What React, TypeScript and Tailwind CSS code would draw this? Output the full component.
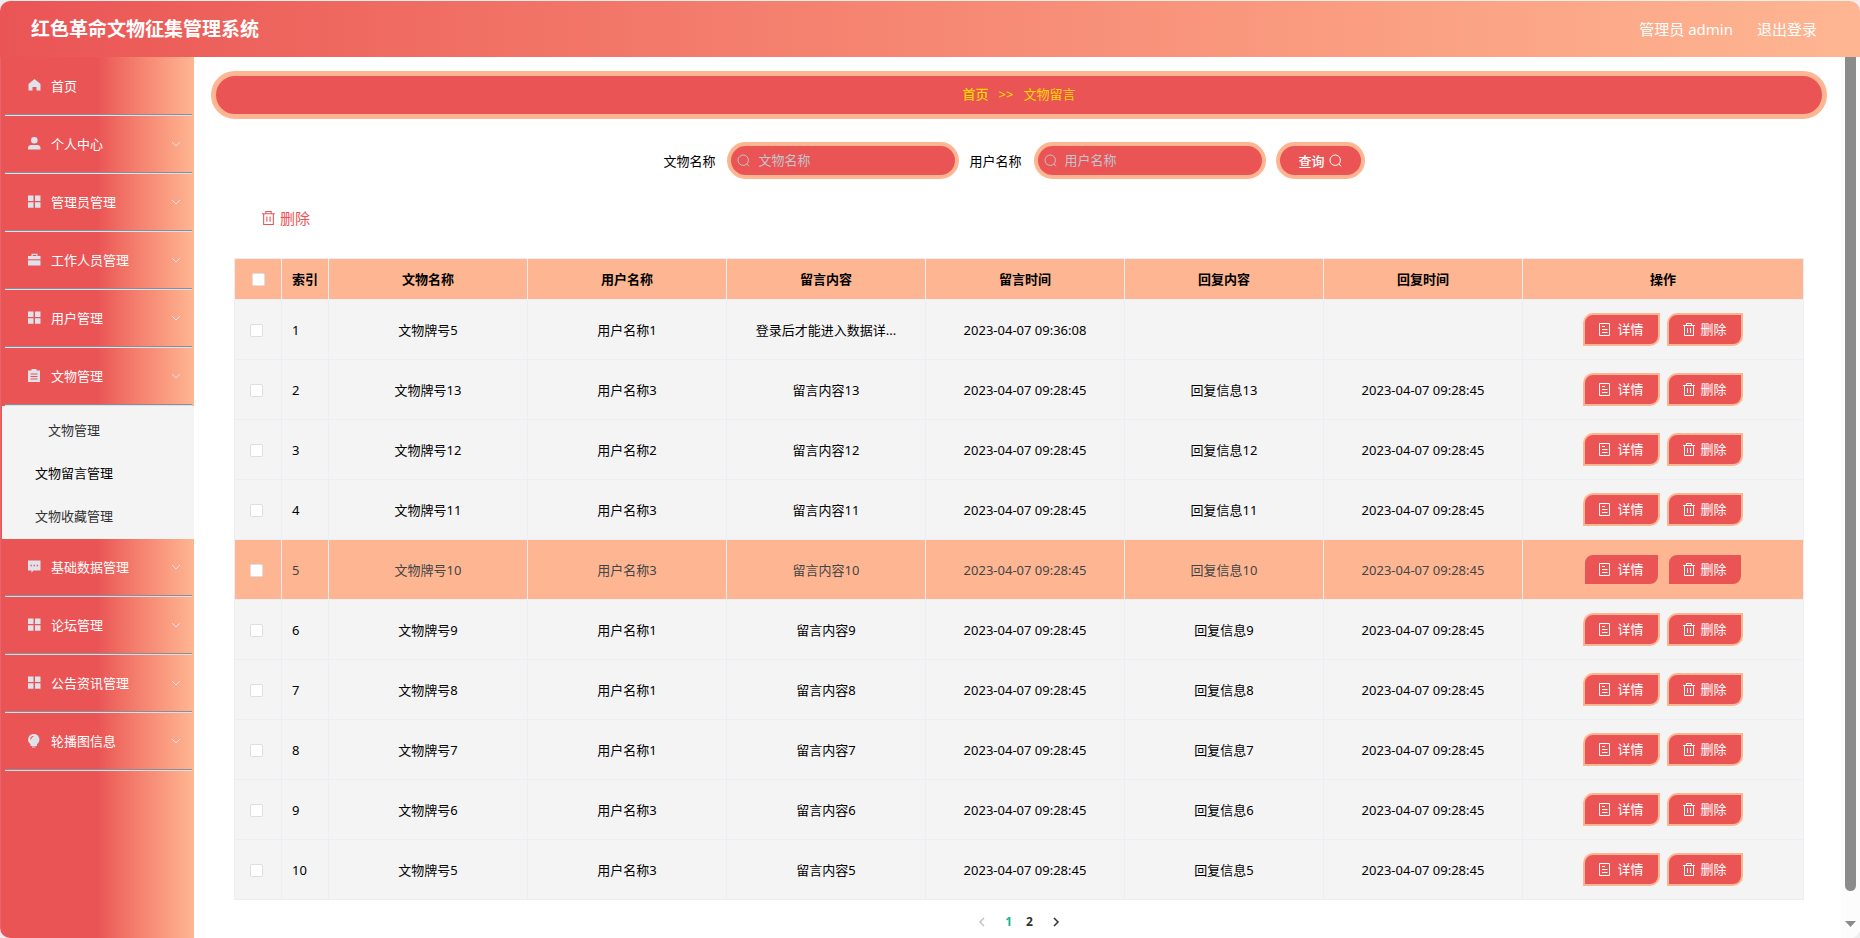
import React from "react";

const rows = [
  { id: 1, relic: "文物牌号5", user: "用户名称1", message: "登录后才能进入数据详...", time: "2023-04-07 09:36:08", reply: "", replyTime: "" },
  { id: 2, relic: "文物牌号13", user: "用户名称3", message: "留言内容13", time: "2023-04-07 09:28:45", reply: "回复信息13", replyTime: "2023-04-07 09:28:45" },
  { id: 3, relic: "文物牌号12", user: "用户名称2", message: "留言内容12", time: "2023-04-07 09:28:45", reply: "回复信息12", replyTime: "2023-04-07 09:28:45" },
  { id: 4, relic: "文物牌号11", user: "用户名称3", message: "留言内容11", time: "2023-04-07 09:28:45", reply: "回复信息11", replyTime: "2023-04-07 09:28:45" },
  { id: 5, relic: "文物牌号10", user: "用户名称3", message: "留言内容10", time: "2023-04-07 09:28:45", reply: "回复信息10", replyTime: "2023-04-07 09:28:45" },
  { id: 6, relic: "文物牌号9", user: "用户名称1", message: "留言内容9", time: "2023-04-07 09:28:45", reply: "回复信息9", replyTime: "2023-04-07 09:28:45" },
  { id: 7, relic: "文物牌号8", user: "用户名称1", message: "留言内容8", time: "2023-04-07 09:28:45", reply: "回复信息8", replyTime: "2023-04-07 09:28:45" },
  { id: 8, relic: "文物牌号7", user: "用户名称1", message: "留言内容7", time: "2023-04-07 09:28:45", reply: "回复信息7", replyTime: "2023-04-07 09:28:45" },
  { id: 9, relic: "文物牌号6", user: "用户名称3", message: "留言内容6", time: "2023-04-07 09:28:45", reply: "回复信息6", replyTime: "2023-04-07 09:28:45" },
  { id: 10, relic: "文物牌号5", user: "用户名称3", message: "留言内容5", time: "2023-04-07 09:28:45", reply: "回复信息5", replyTime: "2023-04-07 09:28:45" },
];

const highlighted = 5;

const menuIcons = {
  home: <path d="M6.5 0 12.500 5v6.500H8.500V8h-4v3.500H.5V5z" />,
  user: (
    <>
      <circle cx="6.300" cy="3.300" r="3.300" />
      <path d="M0 12.500v-1.500C0 9 1.500 8 3 8h6.500c1.500 0 3 1 3 3v1.500z" />
    </>
  ),
  grid: <path d="M0 .5h5.500V6H0zM7 .5h5.500V6H7zM0 7.300h5.500v5.500H0zM7 7.300h5.500v5.500H7z" />,
  briefcase: (
    <>
      <path d="M3.500 3V.800h6V3H12.500v3.300H0V3zM4.700 3h3.600V2H4.700z" fillRule="evenodd" />
      <path d="M0 7.300h12.500v5.200H0z" />
    </>
  ),
  clipboard: <path fillRule="evenodd" d="M0 1.500h3.500V0h5v1.500H12V13H0zM2.500 4.500v1h7v-1zM2.500 7v1h7V7zM2.500 9.500v1h7v-1z" />,
  comment: <path fillRule="evenodd" d="M0 .5h12.500v10H5.500L3.500 12.800V10.500H0zM2.500 4.800v1.400h1.400V4.800zM5.600 4.800v1.400H7V4.800zM8.700 4.800v1.400h1.400V4.800z" />,
  bulb: <path fillRule="evenodd" d="M5.700 0a5.600 5.600 0 0 1 3.300 10.200V12H2.500v-1.800A5.600 5.600 0 0 1 5.700 0zM2.200 5.400h1c0-1.300.8-2.200 2.200-2.400V2C3.500 2.200 2.200 3.500 2.200 5.400zM4 12.600h3.500v.9H4z" />,
};

type MenuIcon = keyof typeof menuIcons;

const upperMenu: { label: string; icon: MenuIcon }[] = [
  { label: "个人中心", icon: "user" },
  { label: "管理员管理", icon: "grid" },
  { label: "工作人员管理", icon: "briefcase" },
  { label: "用户管理", icon: "grid" },
  { label: "文物管理", icon: "clipboard" },
];

const lowerMenu: { label: string; icon: MenuIcon }[] = [
  { label: "基础数据管理", icon: "comment" },
  { label: "论坛管理", icon: "grid" },
  { label: "公告资讯管理", icon: "grid" },
  { label: "轮播图信息", icon: "bulb" },
];

function Chevron({ className }: { className: string }) {
  return (
    <svg viewBox="0 0 10 10" className={className} fill="none" stroke="currentColor" aria-hidden="true">
      <path d="M1 3l4 4 4-4" />
    </svg>
  );
}

function SearchIcon({ className }: { className: string }) {
  return (
    <svg viewBox="0 0 13 13" className={className} fill="none" stroke="currentColor" aria-hidden="true">
      <circle cx="6.200" cy="6.200" r="5.200" />
      <path d="M9.900 9.900 12 12.300" />
    </svg>
  );
}

function TrashIcon({ className }: { className: string }) {
  return (
    <svg viewBox="0 0 12 13" className={className} fill="none" stroke="currentColor" aria-hidden="true">
      <path d="M0 2.500h12M3.500 2.500v-2h5v2M1.500 2.500v10h9v-10M4.500 5v5M7.500 5v5" />
    </svg>
  );
}

function DetailIcon() {
  return (
    <svg viewBox="0 0 12 13" className="h-[13px] w-3" fill="none" stroke="currentColor" aria-hidden="true">
      <path d="M.5.5h10v12H.5zM3 3.500h3M3 6.500h5.500M3 9.500h5.500" />
    </svg>
  );
}

function MenuItem({ label, icon, expandable = true }: { label: string; icon: MenuIcon; expandable?: boolean }) {
  return (
    <li className="ml-1 mr-0.5 h-[58px] border-b border-[#dcdfe6]">
      <a href="#" className="flex h-full items-center border-b border-[#8b8e99] pb-px pl-[23px] pr-[11px] text-white">
        <svg viewBox="0 0 13 14" className="mr-2.5 h-3.5 w-[13px] fill-[#dfe2ea]" aria-hidden="true">
          {menuIcons[icon]}
        </svg>
        <span className="flex-1">{label}</span>
        {expandable && <Chevron className="size-2.5 text-[#dfe2ea]" />}
      </a>
    </li>
  );
}

function SearchField({ id, label }: { id: string; label: string }) {
  return (
    <div className="flex items-center gap-3">
      <label htmlFor={id}>{label}</label>
      <div className="flex h-[37px] w-[232px] items-center gap-2 rounded-full border-4 border-[#feb692] bg-[#ea5455] pb-px pl-1.5 pr-3">
        <SearchIcon className="size-[13px] shrink-0 text-[#c0c4cc]" />
        <input id={id} type="text" placeholder={label} className="min-w-0 flex-1 bg-transparent text-white outline-none placeholder:text-[#c0c4cc]" />
      </div>
    </div>
  );
}

function CheckBox({ label }: { label: string }) {
  return <input type="checkbox" aria-label={label} className="block size-[13px] appearance-none rounded-xs border border-[#dcdfe6] bg-white checked:bg-[#ea5455]" />;
}

const actionButton = "flex h-[33px] items-center gap-1.5 rounded-tl-[10px] rounded-br-[10px] border-2 border-[#feb692] bg-[#ea5455] px-3.5 pb-px text-white";

export default function App() {
  return (
    <div className="min-h-screen bg-[#eeeeee] pt-px font-['Noto_Sans','Noto_Sans_CJK_SC',sans-serif] text-[13px] leading-5 text-black">
      <div className="flex min-h-[calc(100vh-1px)] flex-col overflow-hidden rounded-[10px] bg-white">
        <header className="flex h-14 items-center justify-between bg-linear-to-r from-[#ea5455] to-[#feb692] pl-[31px] pr-[43px] text-white">
          <h1 className="text-[19px] font-bold">红色革命文物征集管理系统</h1>
          <div className="flex gap-6 text-[15px]">
            <span>管理员 admin</span>
            <a href="#">退出登录</a>
          </div>
        </header>

        <div className="flex flex-1">
          <nav className="w-[194px] shrink-0 border-l border-[#e5666a] bg-linear-to-r from-[#ea5455] from-50% to-[#feb692] pt-px">
            <ul>
              <MenuItem label="首页" icon="home" expandable={false} />
              {upperMenu.map((item) => (
                <MenuItem key={item.label} {...item} />
              ))}
            </ul>
            <ul className="ml-px bg-[#f4f4f4] py-0.5 text-[#303133]">
              <li className="flex h-[43px] items-center pl-[46px]"><a href="#">文物管理</a></li>
              <li className="flex h-[43px] items-center pl-[33px] text-black"><a href="#" aria-current="page">文物留言管理</a></li>
              <li className="flex h-[43px] items-center pl-[33px]"><a href="#">文物收藏管理</a></li>
            </ul>
            <ul>
              {lowerMenu.map((item) => (
                <MenuItem key={item.label} {...item} />
              ))}
            </ul>
          </nav>

          <main className="min-w-0 flex-1 pl-[17px] pr-3.5 pt-3.5">
            <nav aria-label="面包屑" className="flex h-12 items-center justify-center gap-2.5 rounded-full border-5 border-[#feb692] bg-[#ea5455] pb-0.5 text-[#ffd700]">
              <a href="#" className="font-medium">首页</a>
              <span className="font-medium">&gt;&gt;</span>
              <span>文物留言</span>
            </nav>

            <form className="mt-[23px] flex items-center justify-center gap-2.5 pr-2.5" onSubmit={(e) => e.preventDefault()}>
              <SearchField id="relic-name" label="文物名称" />
              <SearchField id="user-name" label="用户名称" />
              <button type="submit" className="flex h-[37px] items-center gap-1 rounded-full border-4 border-[#feb692] bg-[#ea5455] px-[19px] font-medium text-white">
                查询
                <SearchIcon className="size-[13px]" />
              </button>
            </form>

            <div className="px-[23px]">
              <button type="button" className="ml-7 mt-7 flex h-[22px] items-center gap-[5px] text-[15px] text-[#ea5455]">
                <TrashIcon className="h-3.5 w-[13px]" />
                删除
              </button>

              <table className="mt-[29px] w-full table-fixed border-collapse bg-[#f4f4f4]">
                <colgroup>
                  <col className="w-[47px]" />
                  <col className="w-[47px]" />
                  <col />
                  <col />
                  <col />
                  <col />
                  <col />
                  <col />
                  <col className="w-[281px]" />
                </colgroup>
                <thead>
                  <tr className="h-[41px] bg-[#feb692] *:border *:border-[#ebeef5] *:font-bold">
                    <th>
                      <div className="flex justify-center"><CheckBox label="全选" /></div>
                    </th>
                    <th>索引</th>
                    <th>文物名称</th>
                    <th>用户名称</th>
                    <th>留言内容</th>
                    <th>留言时间</th>
                    <th>回复内容</th>
                    <th>回复时间</th>
                    <th>操作</th>
                  </tr>
                </thead>
                <tbody>
                  {rows.map((row) => (
                    <tr
                      key={row.id}
                      className={
                        row.id === highlighted
                          ? "h-[60px] bg-[#feb692] text-center text-[#444444] *:border *:border-[#ebeef5]"
                          : "h-[60px] text-center *:border *:border-[#ebeef5]"
                      }
                    >
                      <td className="pl-[15px] pt-0.5"><CheckBox label={`选择第${row.id}行`} /></td>
                      <td className="pl-2.5 text-left">{row.id}</td>
                      <td>{row.relic}</td>
                      <td>{row.user}</td>
                      <td>{row.message}</td>
                      <td>{row.time}</td>
                      <td>{row.reply}</td>
                      <td>{row.replyTime}</td>
                      <td>
                        <div className="flex justify-center gap-[7px]">
                          <button type="button" className={actionButton}><DetailIcon />详情</button>
                          <button type="button" className={actionButton}><TrashIcon className="h-[13px] w-3" />删除</button>
                        </div>
                      </td>
                    </tr>
                  ))}
                </tbody>
              </table>

              <nav aria-label="分页" className="mt-3.5 flex items-center justify-center gap-3.5 text-xs font-bold text-[#303133]">
                <button type="button" aria-label="上一页" className="mr-1" disabled><Chevron className="size-2.5 rotate-90 stroke-[1.500] text-[#c0c4cc]" /></button>
                <button type="button" className="text-[#18b78a]">1</button>
                <button type="button">2</button>
                <button type="button" aria-label="下一页" className="ml-1"><Chevron className="size-2.5 -rotate-90 stroke-[1.500]" /></button>
              </nav>
            </div>
          </main>

          <div className="flex w-[19px] shrink-0 flex-col items-center justify-between bg-[#fcfcfc] pb-[11px]" aria-hidden="true">
            <div className="mb-[30px] w-[11px] flex-1 rounded-b-full bg-[#8b8b8b]" />
            <svg viewBox="0 0 11 6" className="h-1.5 w-[11px] fill-[#8b8b8b]">
              <path d="M0 0h11L5.500 6z" />
            </svg>
          </div>
        </div>
      </div>
    </div>
  );
}
